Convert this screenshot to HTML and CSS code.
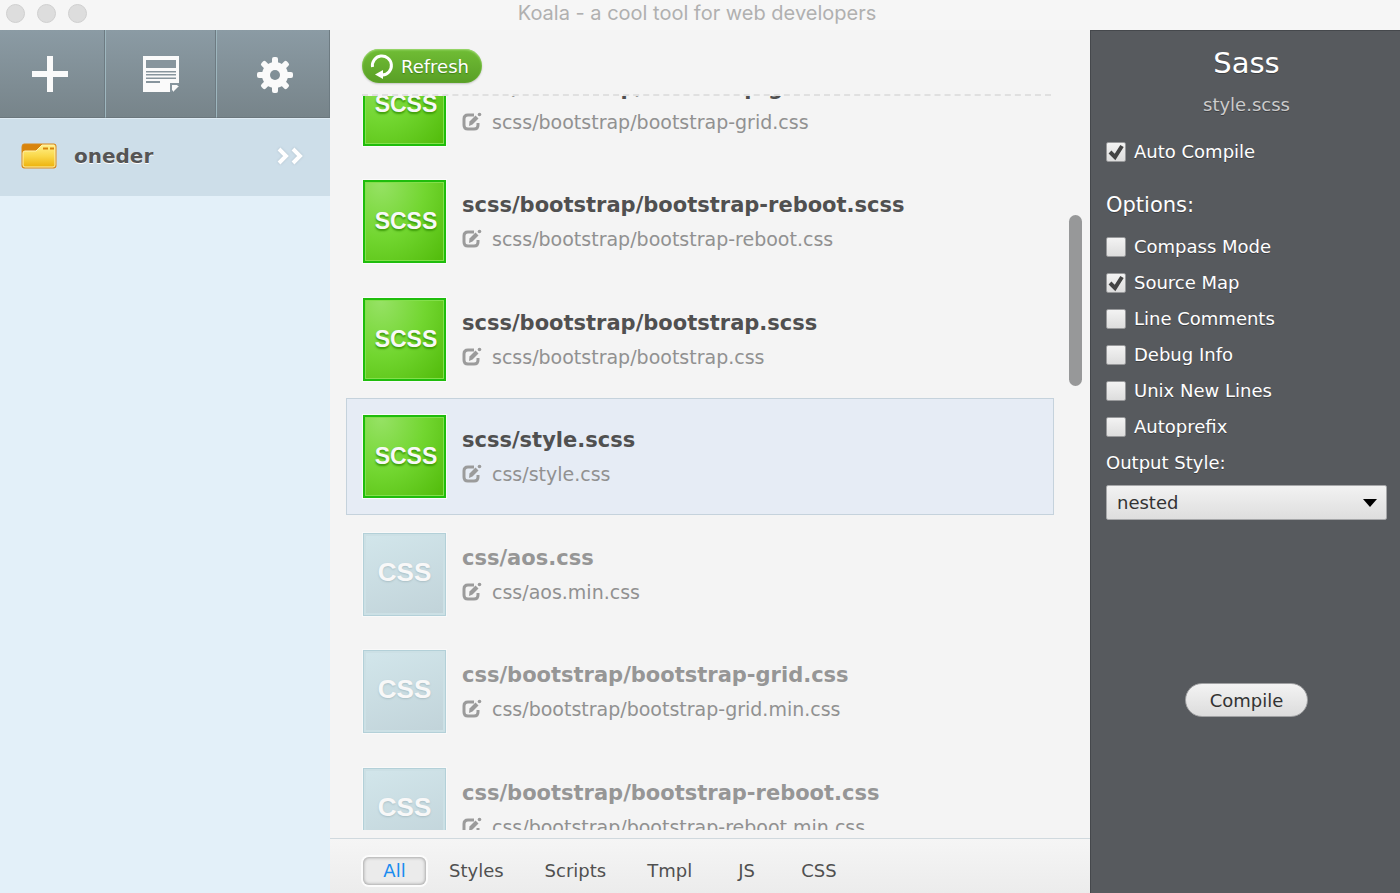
FILE: index.html
```
<!DOCTYPE html>
<html lang="en">
  <head>
    <meta charset="UTF-8" />
    <meta name="viewport" content="width=device-width, initial-scale=1.0" />
    <title>Koala - a cool tool for web developers</title>
    <link rel="stylesheet" href="styles.css">
  </head>
  <body>
    <svg class="sprite" aria-hidden="true">
      <symbol id="icon-edit" viewBox="0 0 20 20">
        <path d="M12 3H6Q2 3 2 7V13Q2 17 6 17H12Q16 17 16 13V11" fill="none" stroke="currentColor" stroke-width="3" />
        <path d="M7 14L7.500 9.500L13.500 3.500L16.500 6.500L10.500 12.500Z" fill="currentColor" />
        <circle cx="17.500" cy="2.500" r="1.800" fill="currentColor" />
      </symbol>
    </svg>

    <header class="titlebar">
      <div class="titlebar__lights">
        <span class="titlebar__light"></span>
        <span class="titlebar__light"></span>
        <span class="titlebar__light"></span>
      </div>
      <div class="titlebar__text">Koala - a cool tool for web developers</div>
    </header>

    <div class="app">
      <aside class="sidebar">
        <div class="toolbar">
          <button class="toolbar__button" type="button" aria-label="Add project">
            <svg width="36" height="36" viewBox="0 0 36 36">
              <path d="M15 0h6v15h15v6H21v15h-6V21H0v-6h15z" fill="#fafafa" />
            </svg>
          </button>
          <button class="toolbar__button" type="button" aria-label="Log">
            <svg width="36" height="36" viewBox="0 0 36 36">
              <path d="M0 0h36v28l-8 8H0z" fill="#fafafa" />
              <path d="M3 4h30v8H3zM3 15h30v1.500H3zM3 18h30v1.500H3zM3 21.500h30V23H3zM3 25h14v2H3z" fill="#87959d" />
              <path d="M28 36v-8h8" fill="none" stroke="#87959d" stroke-width="2" />
              <path d="M30 30h6l-6 6z" fill="#fafafa" />
            </svg>
          </button>
          <button class="toolbar__button" type="button" aria-label="Settings">
            <svg width="38" height="38" viewBox="-19 -19 38 38" fill="#fafafa">
              <mask id="hole" maskUnits="userSpaceOnUse" x="-19" y="-19" width="38" height="38">
                <rect x="-19" y="-19" width="38" height="38" fill="#fff" />
                <circle r="5" fill="#000" />
              </mask>
              <g mask="url(#hole)">
                <circle r="13" />
                <rect x="-3" y="-18" width="6" height="36" rx="2" />
                <rect x="-3" y="-18" width="6" height="36" rx="2" transform="rotate(45)" />
                <rect x="-3" y="-18" width="6" height="36" rx="2" transform="rotate(90)" />
                <rect x="-3" y="-18" width="6" height="36" rx="2" transform="rotate(135)" />
              </g>
            </svg>
          </button>
        </div>
        <a class="project" href="#oneder">
          <svg width="36" height="26" viewBox="0 0 36 26">
            <defs>
              <linearGradient id="folder" x1="0" y1="0" x2="0" y2="1">
                <stop offset="0" stop-color="#fff08a" />
                <stop offset="0.500" stop-color="#fad84a" />
                <stop offset="1" stop-color="#edb20c" />
              </linearGradient>
            </defs>
            <path d="M1 4Q1 1 3 1H33Q35 1 35 3V23Q35 25 33 25H3Q1 25 1 23Z" fill="#d8840c" stroke="#d98a1a" />
            <path d="M2 10Q2 8 4 8H15L21 2H33Q34 2 34 4V22Q34 24 32 24H4Q2 24 2 22Z" fill="url(#folder)" stroke="#fff4b0" stroke-width="1" />
            <path d="M22 5.500h5M29 5.500h4" stroke="#d8840c" stroke-width="2" />
          </svg>
          <span class="project__name">oneder</span>
          <svg class="project__arrow" width="28" height="20" viewBox="0 0 28 20">
            <path d="M3 3l7 7-7 7M17 3l7 7-7 7" fill="none" stroke="#fff" stroke-width="4" />
          </svg>
        </a>
      </aside>

      <main class="files">
        <div class="files__header">
          <button class="refresh" type="button">
            <svg width="24" height="26" viewBox="0 0 24 26">
              <path d="M2.500 14A9.500 9.500 0 1 1 12.500 22" fill="none" stroke="#fff" stroke-width="3" />
              <path d="M5 21.500l8-4.500v9z" fill="#fff" />
            </svg>
            Refresh
          </button>
        </div>

        <div class="files__viewport">
          <ul class="file-list">
            <li class="file">
              <div class="file__type file__type--scss">SCSS</div>
              <div class="file__text">
                <div class="file__source">scss/bootstrap/bootstrap-grid.scss</div>
                <div class="file__output"><svg class="file__edit"><use href="#icon-edit" /></svg>scss/bootstrap/bootstrap-grid.css</div>
              </div>
            </li>
            <li class="file">
              <div class="file__type file__type--scss">SCSS</div>
              <div class="file__text">
                <div class="file__source">scss/bootstrap/bootstrap-reboot.scss</div>
                <div class="file__output"><svg class="file__edit"><use href="#icon-edit" /></svg>scss/bootstrap/bootstrap-reboot.css</div>
              </div>
            </li>
            <li class="file">
              <div class="file__type file__type--scss">SCSS</div>
              <div class="file__text">
                <div class="file__source">scss/bootstrap/bootstrap.scss</div>
                <div class="file__output"><svg class="file__edit"><use href="#icon-edit" /></svg>scss/bootstrap/bootstrap.css</div>
              </div>
            </li>
            <li class="file file--active">
              <div class="file__type file__type--scss">SCSS</div>
              <div class="file__text">
                <div class="file__source">scss/style.scss</div>
                <div class="file__output"><svg class="file__edit"><use href="#icon-edit" /></svg>css/style.css</div>
              </div>
            </li>
            <li class="file file--idle">
              <div class="file__type file__type--css">CSS</div>
              <div class="file__text">
                <div class="file__source">css/aos.css</div>
                <div class="file__output"><svg class="file__edit"><use href="#icon-edit" /></svg>css/aos.min.css</div>
              </div>
            </li>
            <li class="file file--idle">
              <div class="file__type file__type--css">CSS</div>
              <div class="file__text">
                <div class="file__source">css/bootstrap/bootstrap-grid.css</div>
                <div class="file__output"><svg class="file__edit"><use href="#icon-edit" /></svg>css/bootstrap/bootstrap-grid.min.css</div>
              </div>
            </li>
            <li class="file file--idle">
              <div class="file__type file__type--css">CSS</div>
              <div class="file__text">
                <div class="file__source">css/bootstrap/bootstrap-reboot.css</div>
                <div class="file__output"><svg class="file__edit"><use href="#icon-edit" /></svg>css/bootstrap/bootstrap-reboot.min.css</div>
              </div>
            </li>
          </ul>
          <div class="files__thumb"></div>
        </div>

        <nav class="filters">
          <button class="filters__item filters__item--active" type="button">All</button>
          <button class="filters__item" type="button">Styles</button>
          <button class="filters__item" type="button">Scripts</button>
          <button class="filters__item" type="button">Tmpl</button>
          <button class="filters__item" type="button">JS</button>
          <button class="filters__item" type="button">CSS</button>
        </nav>
      </main>

      <form class="settings">
        <h1 class="settings__title">Sass</h1>
        <p class="settings__file">style.scss</p>
        <label class="option"><input class="option__box" type="checkbox" checked />Auto Compile</label>
        <h2 class="settings__heading">Options:</h2>
        <label class="option"><input class="option__box" type="checkbox" />Compass Mode</label>
        <label class="option"><input class="option__box" type="checkbox" checked />Source Map</label>
        <label class="option"><input class="option__box" type="checkbox" />Line Comments</label>
        <label class="option"><input class="option__box" type="checkbox" />Debug Info</label>
        <label class="option"><input class="option__box" type="checkbox" />Unix New Lines</label>
        <label class="option"><input class="option__box" type="checkbox" />Autoprefix</label>
        <label class="option" for="output-style">Output Style:</label>
        <select class="settings__select" id="output-style">
          <option>nested</option>
          <option>expanded</option>
          <option>compact</option>
          <option>compressed</option>
        </select>
        <button class="compile" type="button">Compile</button>
      </form>
    </div>
  </body>
</html>
```
FILE: styles.css
```
* {
  box-sizing: border-box;
}

body {
  margin: 0;
  height: 100vh;
  display: flex;
  flex-direction: column;
  background: #f4f4f4;
  color: #505050;
  font-family: 'Lucida Grande', 'DejaVu Sans', sans-serif;
  font-size: 18px;
}

button,
select {
  font: inherit;
}

.sprite {
  display: none;
}

/* title bar */

.titlebar {
  display: grid;
  grid-template-columns: 1fr auto 1fr;
  align-items: center;
  height: 30px;
  padding: 0 12px 4px 6px;
  background: #f6f6f6;
  flex-shrink: 0;
}

.titlebar__lights {
  display: flex;
  gap: 12px;
}

.titlebar__light {
  width: 19px;
  height: 19px;
  border: 1px solid #d0d0d0;
  border-radius: 50%;
  background: #dddddd;
}

.titlebar__text {
  font-family: Inter, sans-serif;
  font-size: 20px;
  line-height: 26px;
  color: #b0b0b0;
}

.app {
  flex: 1;
  min-height: 0;
  display: grid;
  grid-template-columns: 330px 1fr 310px;
}

/* sidebar */

.sidebar {
  background: #e3f0f9;
}

.toolbar {
  display: grid;
  grid-template-columns: 106px 111px 1fr;
  height: 88px;
}

.toolbar__button {
  display: flex;
  align-items: center;
  justify-content: center;
  padding: 0 6px 0 0;
  border: 0;
  border-right: 1px solid #9eb6be;
  border-bottom: 1px solid #6b777d;
  background: linear-gradient(#8b9ba4, #77848a);
  box-shadow: inset -1px 0 #6d7b82;
}

.toolbar__button:nth-child(2) {
  padding: 0;
}

.toolbar__button:last-child {
  padding: 2px 0 0 2px;
  border-right: 0;
}

.project {
  display: flex;
  align-items: center;
  height: 78px;
  padding: 0 26px 4px 21px;
  border-top: 1px solid #deebf4;
  background: #cddee9;
  color: #555555;
  text-decoration: none;
}

.project__name {
  flex: 1;
  margin-left: 17px;
  font-size: 20px;
  font-weight: bold;
  text-shadow: 0 1px #ffffff;
}

.project__arrow {
  filter: drop-shadow(0 0 1px #aebfca);
}

/* file list */

.files {
  min-width: 0;
  min-height: 0;
  display: flex;
  flex-direction: column;
}

.files__header {
  height: 66px;
  margin: 0 39px 0 32px;
  padding-top: 19px;
  border-bottom: 2px dashed #e0e0e0;
  flex-shrink: 0;
}

.refresh {
  display: flex;
  align-items: center;
  gap: 7px;
  height: 34px;
  padding: 0 13px 0 8px;
  border: 0;
  border-radius: 17px;
  background: linear-gradient(#70bd35, #599f26);
  box-shadow: inset 0 1px 2px #a3dc78, 0 1px 2px #c4c4c4;
  color: #ffffff;
  text-shadow: 0 1px 1px #3f7f15;
}

.files__viewport {
  position: relative;
  flex: 1;
  min-height: 0;
  margin-bottom: 8px;
  overflow: hidden;
}

/* list is scrolled part way through its first row */
.file-list {
  margin: -50px 36px 0 16px;
  padding: 0;
  list-style: none;
}

.file {
  display: flex;
  align-items: center;
  gap: 16px;
  padding: 16px;
  border: 1px solid transparent;
}

.file:nth-child(even) {
  margin-bottom: 1px;
}

.file--active {
  border-color: #c5d2dc;
  background: #e6ecf5;
}

.file__type {
  display: flex;
  align-items: center;
  justify-content: center;
  width: 83px;
  height: 83px;
  border: 2px solid;
  color: #f8f8f8;
  font-family: 'Liberation Sans', Arial, sans-serif;
  font-weight: bold;
  flex-shrink: 0;
}

.file__type--scss {
  padding-left: 3px;
  border-color: #1fbd0c;
  background: radial-gradient(ellipse at 20% 0, #97e266, #72d630 50%, #4ab502 110%);
  box-shadow: inset 0 0 0 1px #83df4b, 0 0 0 1px #fbfbfb;
  font-size: 23px;
  text-shadow: 0 2px 2px #3d9c08;
}

.file__type--css {
  padding-bottom: 4px;
  border: 1px solid #b3d0d8;
  background: linear-gradient(160deg, #d2e6eb, #c1d3d9);
  box-shadow: inset 0 0 0 2px #cce0e5, 0 0 0 1px #f9f9f9;
  font-size: 26px;
  text-shadow: 0 1px 2px #aabfc5;
}

.file__source {
  color: #505050;
  font-size: 21px;
  font-weight: bold;
  line-height: 34px;
  white-space: nowrap;
}

.file--idle .file__source {
  color: #969696;
}

.file__output {
  display: flex;
  align-items: center;
  gap: 10px;
  color: #919191;
  font-size: 19px;
  line-height: 34px;
  white-space: nowrap;
}

.file__edit {
  width: 20px;
  height: 20px;
  color: #9b9b9b;
}

.files__thumb {
  position: absolute;
  top: 119px;
  right: 8px;
  width: 13px;
  height: 171px;
  border-radius: 7px;
  background: #979899;
}

/* filters */

.filters {
  display: flex;
  align-items: center;
  gap: 5px;
  height: 55px;
  padding: 9px 33px 0;
  border-top: 1px solid #d0d9de;
  background: linear-gradient(#f5f5f5, #ececec);
  flex-shrink: 0;
}

.filters__item {
  min-width: 63px;
  height: 28px;
  padding: 0 18px;
  border: 0;
  border-radius: 6px;
  background: none;
  color: #505050;
  line-height: 28px;
}

.filters__item--active {
  background: #ebebeb;
  box-shadow: inset 0 0 3px 1px #aaaaaa, 0 0 0 2px #fcfcfc;
  color: #1a8cf0;
}

/* settings */

.settings {
  display: flex;
  flex-direction: column;
  padding: 12px 13px 0 15px;
  border-top: 1px solid #45484c;
  border-left: 1px solid #45484c;
  background: #575a5e;
  color: #ffffff;
  text-shadow: 0 1px #3c3e41;
}

.settings__title {
  margin: 0;
  font-size: 29px;
  font-weight: normal;
  line-height: 40px;
  text-align: center;
}

.settings__file {
  margin: 4px 0 11px;
  color: #cccccc;
  line-height: 36px;
  text-align: center;
}

.settings__heading {
  margin: 15px 0 4px;
  font-size: 21px;
  font-weight: normal;
  line-height: 40px;
}

.option {
  display: flex;
  align-items: center;
  gap: 8px;
  line-height: 36px;
}

.option__box {
  appearance: none;
  width: 20px;
  height: 20px;
  margin: 0;
  border: 1px solid #98999b;
  border-radius: 2px;
  background: linear-gradient(#f3f3f3, #dddddd);
}

.option__box:checked {
  background: url("data:image/svg+xml,%3Csvg xmlns='http://www.w3.org/2000/svg' viewBox='0 0 18 18'%3E%3Cpath d='M3 9l5 5 7-11' fill='none' stroke='%23444' stroke-width='4'/%3E%3C/svg%3E"), linear-gradient(#f3f3f3, #dddddd);
}

.settings__select {
  appearance: none;
  height: 35px;
  margin-top: 4px;
  padding: 0 10px;
  border: 1px solid #a6a7a9;
  border-radius: 2px;
  background: url("data:image/svg+xml,%3Csvg xmlns='http://www.w3.org/2000/svg' width='14' height='8'%3E%3Cpath d='M0 0h14L7 8z'/%3E%3C/svg%3E") no-repeat right 9px center, linear-gradient(#f2f2f2, #dedede);
  color: #333333;
}

.compile {
  align-self: center;
  height: 34px;
  margin-top: 163px;
  padding: 0 24px;
  border: 1px solid #a0a1a3;
  border-radius: 17px;
  background: linear-gradient(#f3f3f3, #dcdcdc);
  color: #333333;
}
```
